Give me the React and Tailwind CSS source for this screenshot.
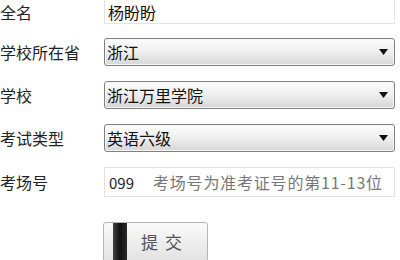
const font = { fontFamily: '"Noto Sans CJK SC", "Liberation Sans", sans-serif' }

function Arrow() {
  return (
    <svg width="9" height="6" viewBox="0 0 9 6" className="shrink-0">
      <path d="M0 0 H9 L4.5 6 Z" fill="#111" />
    </svg>
  )
}

function Select({ value }) {
  return (
    <div className="flex h-[28px] w-[291px] items-center justify-between rounded-[3px] border border-[#7f7f7f] bg-gradient-to-b from-[#fdfdfd] via-[#eeeeee] to-[#d6d6d6] pl-[2px] pr-[6px] shadow-[inset_0_0_0_1px_#f8f8f8]">
      <span className="text-[16px] leading-none text-[#111]">{value}</span>
      <Arrow />
    </div>
  )
}

function Row({ label, children, className = '' }) {
  return (
    <div className={`flex items-center ${className}`}>
      <div className="w-[104px] text-[16px] leading-none text-[#222]">{label}</div>
      {children}
    </div>
  )
}

export default function App() {
  return (
    <div className="h-[260px] w-[400px] overflow-hidden bg-white" style={font}>
      <Row label="全名" className="h-[24px]">
        <div className="-mt-[6px] flex h-[30px] w-[291px] items-center self-start border border-[#e2e2e2] pl-[3px] pt-[6px] text-[16px] leading-none text-[#111]">
          杨盼盼
        </div>
      </Row>
      <Row label="学校所在省" className="mt-[14px] h-[28px]">
        <Select value="浙江" />
      </Row>
      <Row label="学校" className="mt-[15px] h-[28px]">
        <Select value="浙江万里学院" />
      </Row>
      <Row label="考试类型" className="mt-[15px] h-[28px]">
        <Select value="英语六级" />
      </Row>
      <Row label="考场号" className="mt-[15px] h-[30px]">
        <div className="flex h-[30px] w-[291px] items-center border border-[#e2e2e2] pl-[4px] text-[16px] leading-none">
          <span className="text-[15px] text-[#222]">099</span>
          <span className="ml-[19px] tracking-[0.8px] text-[#777]">考场号为准考证号的第11-13位</span>
        </div>
      </Row>
      <div className="ml-[103px] mt-[25px] flex h-[40px] w-[105px] overflow-hidden rounded-[3px] border border-[#b5b5b5] bg-gradient-to-b from-[#fafafa] to-[#e2e2e2]">
        <div className="ml-[9px] w-[14px] bg-gradient-to-r from-[#444] via-[#111] to-[#2a2a2a]" />
        <div className="flex flex-1 items-center justify-center pr-[4px] text-[17px] tracking-[7px] text-[#555]">
          提交
        </div>
      </div>
    </div>
  )
}
